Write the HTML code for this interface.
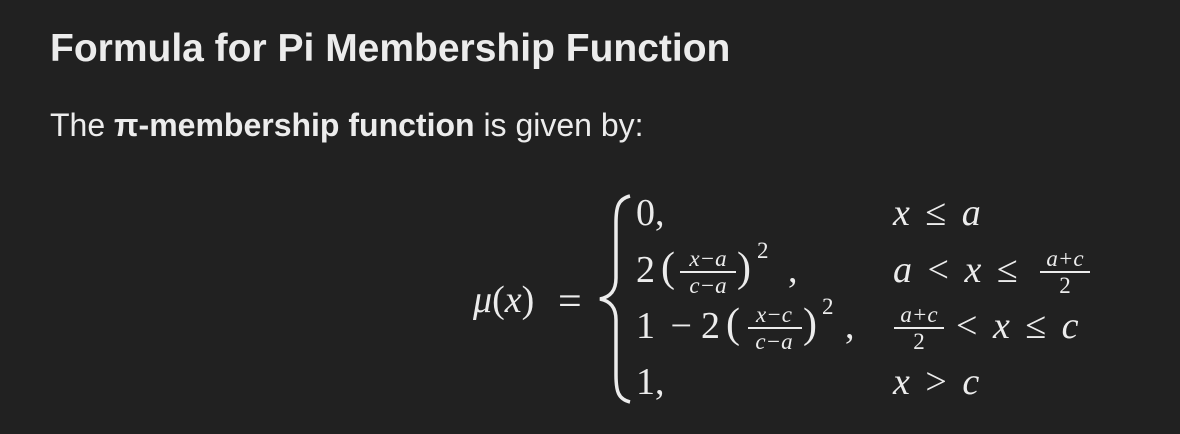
<!DOCTYPE html>
<html><head><meta charset="utf-8"><style>
html,body{margin:0;padding:0;background:#212121;width:1180px;height:434px;overflow:hidden;color:#ececec}
.t{position:absolute;white-space:nowrap;line-height:1}
.s{font-family:"Liberation Sans",sans-serif}
.m{font-family:"Liberation Serif",serif;font-size:38px;word-spacing:6px}
.i{font-style:italic}
.f{font-family:"Liberation Serif",serif;font-size:23px;position:absolute;text-align:center;line-height:1}
.bar{position:absolute;height:1.5px;background:#ececec}
</style></head><body>
<div class="t s" style="left:50px;top:29px;font-size:39px;font-weight:bold;">Formula for Pi Membership Function</div>
<div class="t s" style="left:50px;top:109px;font-size:32px;">The <b>π-membership function</b> is given by:</div>

<div class="t m" style="left:473px;top:281px;"><span class="i">μ</span>(<span class="i">x</span>)</div>
<div class="t m" style="left:558px;top:281px;font-size:42px;">=</div>
<svg style="position:absolute;left:596px;top:193px" width="40" height="212" viewBox="0 0 40 212">
<path d="M34 3 C22 6 20 14 20 30 L20 85 C20 98 14 104 4 106 C14 108 20 114 20 127 L20 182 C20 198 22 206 34 209" fill="none" stroke="#ececec" stroke-width="3.5"/>
</svg>

<!-- row 1 -->
<div class="t m" style="left:636px;top:194px;">0,</div>
<div class="t m" style="left:893px;top:194px;"><span class="i">x</span> ≤ <span class="i">a</span></div>

<!-- row 2 -->
<div class="t m" style="left:636px;top:251px;">2</div>
<div class="t m" style="left:661px;top:247px;font-size:42px;">(</div>
<div class="f i" style="left:678px;top:247px;width:60px;">x−a</div>
<div class="bar" style="left:680px;top:271px;width:56px;"></div>
<div class="f i" style="left:678px;top:274px;width:60px;">c−a</div>
<div class="t m" style="left:737px;top:247px;font-size:42px;">)</div>
<div class="f" style="left:757px;top:239px;">2</div>
<div class="t m" style="left:788px;top:251px;">,</div>
<div class="t m" style="left:893px;top:251px;"><span class="i">a</span> &lt; <span class="i">x</span> ≤</div>
<div class="f i" style="left:1038px;top:247px;width:54px;">a+c</div>
<div class="bar" style="left:1040px;top:271px;width:50px;"></div>
<div class="f" style="left:1038px;top:274px;width:54px;">2</div>

<!-- row 3 -->
<div class="t m" style="left:636px;top:307px;">1 −</div>
<div class="t m" style="left:701px;top:307px;">2</div>
<div class="t m" style="left:726px;top:303px;font-size:42px;">(</div>
<div class="f i" style="left:744px;top:303px;width:60px;">x−c</div>
<div class="bar" style="left:748px;top:327px;width:54px;"></div>
<div class="f i" style="left:744px;top:330px;width:60px;">c−a</div>
<div class="t m" style="left:803px;top:303px;font-size:42px;">)</div>
<div class="f" style="left:822px;top:295px;">2</div>
<div class="t m" style="left:845px;top:307px;">,</div>
<div class="f i" style="left:892px;top:303px;width:54px;">a+c</div>
<div class="bar" style="left:894px;top:327px;width:50px;"></div>
<div class="f" style="left:892px;top:330px;width:54px;">2</div>
<div class="t m" style="left:956px;top:307px;">&lt; <span class="i">x</span> ≤ <span class="i">c</span></div>

<!-- row 4 -->
<div class="t m" style="left:636px;top:363px;">1,</div>
<div class="t m" style="left:893px;top:363px;"><span class="i">x</span> &gt; <span class="i">c</span></div>
</body></html>
